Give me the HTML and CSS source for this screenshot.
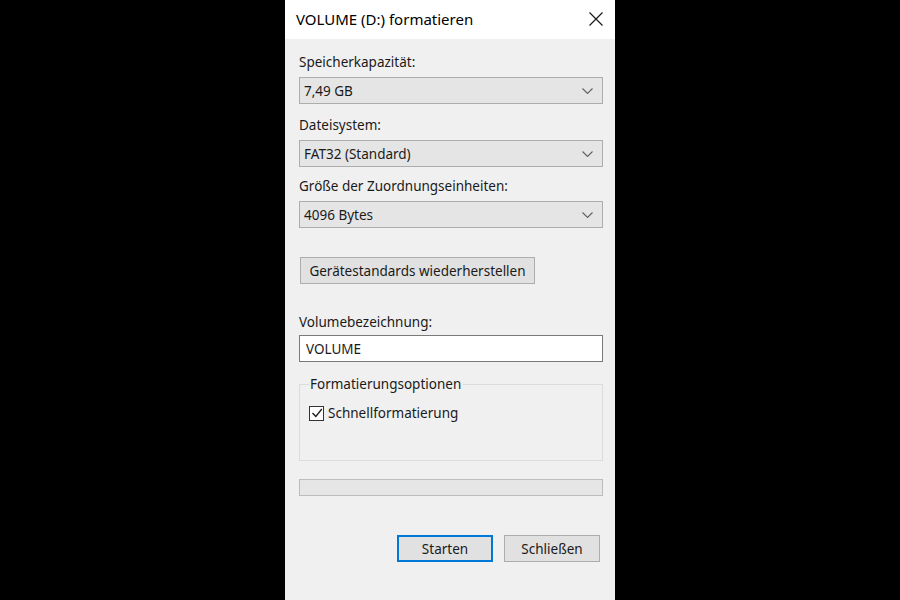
FILE: index.html
```html
<!DOCTYPE html>
<html lang="de">
<head>
<meta charset="utf-8">
<title>VOLUME (D:) formatieren</title>
<link rel="stylesheet" href="styles.css">
</head>
<body>
<div class="dialog">
  <div class="titlebar">
    <span class="title">VOLUME (D:) formatieren</span>
    <span class="close">
      <svg width="14" height="14" viewBox="0 0 14 14"><path d="M0.5 0.5 L13.5 13.5 M13.5 0.5 L0.5 13.5" stroke="#1a1a1a" stroke-width="1.2" fill="none"/></svg>
    </span>
  </div>
  <div class="content">
    <div class="label l1">Speicherkapazität:</div>
    <div class="combo"><span>7,49 GB</span><svg class="chev" width="11" height="6" viewBox="0 0 11 6"><path d="M0.5 0.5 L5.5 5.5 L10.5 0.5" stroke="#606060" stroke-width="1.1" fill="none"/></svg></div>
    <div class="label">Dateisystem:</div>
    <div class="combo"><span>FAT32 (Standard)</span><svg class="chev" width="11" height="6" viewBox="0 0 11 6"><path d="M0.5 0.5 L5.5 5.5 L10.5 0.5" stroke="#606060" stroke-width="1.1" fill="none"/></svg></div>
    <div class="label l3">Größe der Zuordnungseinheiten:</div>
    <div class="combo"><span>4096 Bytes</span><svg class="chev" width="11" height="6" viewBox="0 0 11 6"><path d="M0.5 0.5 L5.5 5.5 L10.5 0.5" stroke="#606060" stroke-width="1.1" fill="none"/></svg></div>
    <div class="row-restore"><button class="btn restore">Gerätestandards wiederherstellen</button></div>
    <div class="label l4">Volumebezeichnung:</div>
    <div class="textbox">VOLUME</div>
    <fieldset class="group">
      <legend>Formatierungsoptionen</legend>
      <label class="check"><span class="box"><svg width="12" height="12" viewBox="0 0 12 12"><path d="M1.5 6 L4.8 9.5 L10.8 2" stroke="#1a1a1a" stroke-width="1.3" fill="none"/></svg></span>Schnellformatierung</label>
    </fieldset>
    <div class="progress"></div>
    <div class="actions">
      <button class="btn default">Starten</button>
      <button class="btn">Schließen</button>
    </div>
  </div>
</div>
</body>
</html>
```
FILE: styles.css
```css
html, body {
  margin: 0;
  padding: 0;
  background: #000;
  height: 600px;
}
body {
  display: flex;
  justify-content: center;
  font-family: "Noto Sans", "Open Sans", "DejaVu Sans", sans-serif;
  font-size: 13.5px;
  color: #1a1a1a;
}
.dialog {
  width: 330px;
  height: 600px;
  background: #f0f0f0;
  display: flex;
  flex-direction: column;
}
.titlebar {
  height: 39px;
  background: #fff;
  display: flex;
  align-items: center;
  justify-content: space-between;
  padding: 0 12px 0 11px;
}
.title {
  font-size: 15px;
  color: #000;
  margin-top: -2px;
}
.close {
  display: flex;
  margin-top: -2px;
}
.content {
  padding: 0 12px 0 14px;
  display: flex;
  flex-direction: column;
}
.label {
  line-height: 18px;
  height: 18px;
  margin-top: 12px;
  margin-bottom: 6px;
}
.label.l1 { margin-top: 14px; }
.label.l3 { margin-top: 10px; }
.label.l4 { margin-top: 29px; margin-bottom: 4px; }
.combo {
  height: 27px;
  box-sizing: border-box;
  border: 1px solid #adadad;
  background: #e5e5e5;
  display: flex;
  align-items: center;
  justify-content: space-between;
  padding: 0 9px 0 4px;
}
.chev { display: block; }
.row-restore {
  margin-top: 29px;
  display: flex;
}
.btn {
  font: inherit;
  color: #1a1a1a;
  background: #e1e1e1;
  border: 1px solid #adadad;
  height: 27px;
  box-sizing: border-box;
  padding: 0;
  margin: 0;
}
.restore {
  width: 235px;
  margin-left: 1px;
}
.textbox {
  height: 27px;
  box-sizing: border-box;
  border: 1px solid #7a7a7a;
  background: #fff;
  display: flex;
  align-items: center;
  padding: 0 6px;
}
.group {
  margin: 14px 0 0 0;
  padding: 0 0 0 9px;
  height: 85px;
  box-sizing: border-box;
  border: 1px solid #dcdcdc;
  min-width: 0;
}
.group legend {
  padding: 0 2px 0 1px;
  line-height: 16px;
}
.check {
  display: flex;
  align-items: center;
  margin-top: 12px;
  gap: 4px;
}
.box {
  width: 15px;
  height: 15px;
  box-sizing: border-box;
  border: 1px solid #333;
  background: #fff;
  display: flex;
  align-items: center;
  justify-content: center;
}
.progress {
  margin-top: 18px;
  height: 17px;
  box-sizing: border-box;
  border: 1px solid #bcbcbc;
  background: #e6e6e6;
}
.actions {
  margin-top: 39px;
  display: flex;
  justify-content: flex-end;
  gap: 11px;
  padding-right: 3px;
}
.actions .btn {
  width: 96px;
}
.actions .default {
  border: 2px solid #0078d7;
}
```
